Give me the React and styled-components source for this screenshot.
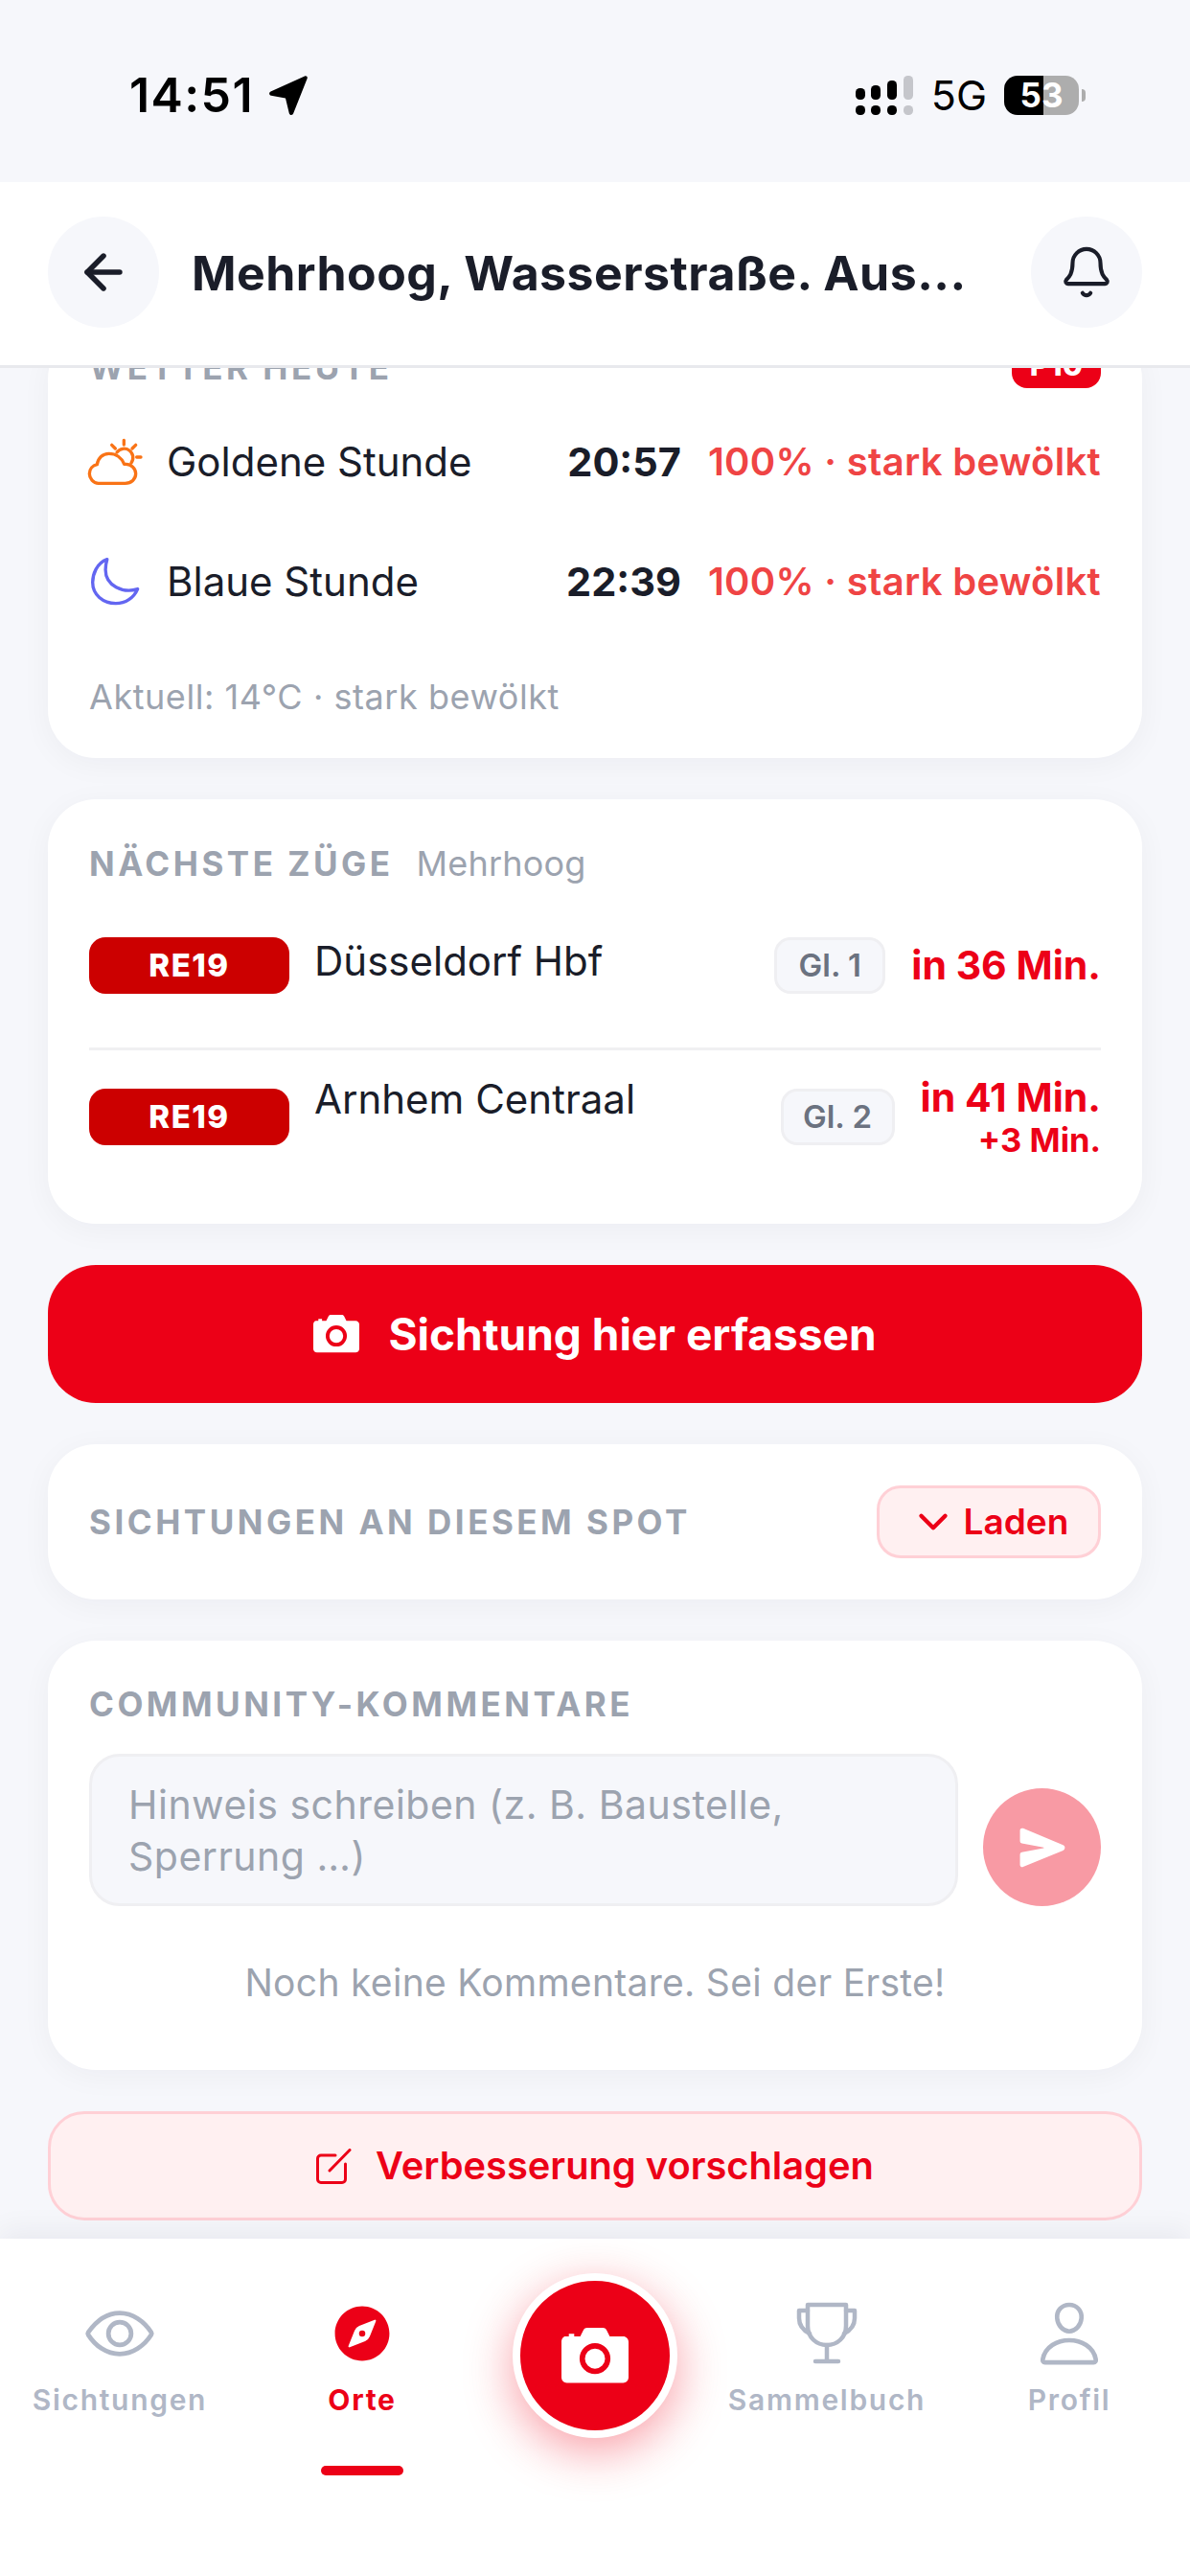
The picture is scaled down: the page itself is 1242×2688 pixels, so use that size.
import React from "react";
import styled, { createGlobalStyle } from "styled-components";
import { IoCompass, IoSend, IoEyeOutline, IoPersonOutline } from "react-icons/io5";
import { ArrowLeft, Bell, ChevronDown } from "lucide-react";

const RED = "#ec0017";
const GRAY = "#9ca3af";
const INK = "#1a1d29";

const Global = createGlobalStyle`
  html, body { margin: 0; padding: 0; background: #f6f7fb; }
  body { font-family: Inter, "Liberation Sans", sans-serif; }
  * { box-sizing: border-box; }
`;

const Screen = styled.div`
  width: 1242px; height: 2688px; display: flex; flex-direction: column;
  background: #f6f7fb; overflow: hidden;
`;
const StatusBar = styled.div`
  height: 190px; flex: none; display: flex; justify-content: space-between; align-items: flex-start;
  padding: 79px 109px 0 135px; color: #000;
`;
const Clock = styled.div`
  display: flex; align-items: center; gap: 13px; height: 41px;
  font: 600 50px/41px Inter, sans-serif; letter-spacing: 1.4px;
`;
const StatusRight = styled.div`display: flex; align-items: center; height: 41px;`;
const Signal = styled.svg`width: 61px; height: 41px; margin-right: 18px;`;
const Net = styled.span`font: 400 43px/41px Inter, sans-serif; margin-right: 18px;`;
const Battery = styled.div`
  width: 78px; height: 41px; border-radius: 14px;
  background: linear-gradient(90deg, #000 0 41px, #adadad 41px);
  color: #fff; font: 700 35px/41px Inter, sans-serif; text-align: center;
`;
const Nub = styled.div`width: 4px; height: 13px; margin-left: 3px; background: #adadad; border-radius: 0 4px 4px 0;`;

const Header = styled.header`
  height: 194px; flex: none; background: #fff; border-bottom: 3px solid #e8e9ed;
  display: flex; align-items: center; padding: 0 50px 0; position: relative; z-index: 2;
`;
const RoundBtn = styled.div`
  width: 116px; height: 116px; border-radius: 50%; background: #f6f7fb; color: ${INK};
  display: flex; align-items: center; justify-content: center; flex: none; margin-bottom: 3px;
`;
const Title = styled.h1`
  flex: 1; margin: 0 0 2px 34px; font: 700 50px/60px Inter, sans-serif; color: ${INK}; white-space: nowrap;
  letter-spacing: .45px;
`;

const Main = styled.main`
  flex: 1; min-height: 0; overflow: hidden; display: flex; flex-direction: column; justify-content: flex-end;
  gap: 43px; padding: 0 50px 19px;
`;
const Card = styled.section`
  flex: none; background: #fff; border-radius: 50px; padding: ${p => p.$pad || "44px 43px"};
  box-shadow: 0 6px 32px rgba(20, 25, 50, .045);
`;
const Label = styled.span`
  font: 700 35px/44px Inter, sans-serif; letter-spacing: 3.5px; color: ${GRAY}; white-space: nowrap;
`;
const WeatherHead = styled.div`
  display: flex; justify-content: space-between; align-items: flex-end; height: 60px; margin-bottom: 14px;
`;
const ProBadge = styled.span`
  background: ${RED}; color: #fff; border-radius: 16px; width: 93px; height: 48px;
  font: 800 31px/48px Inter, sans-serif; text-align: center;
`;
const SunRow = styled.div`display: flex; align-items: center; height: 125px;`;
const SunIcon = styled.svg`
  width: 81px; padding-right: 21px; height: ${p => p.$h}px; flex: none; fill: none; stroke: ${p => p.$c};
  stroke-width: 10; stroke-linecap: round; stroke-linejoin: round; overflow: visible;
`;
const SunName = styled.span`flex: 1; font: 400 42px/50px Inter, sans-serif; color: ${INK};`;
const SunTime = styled.span`font: 700 41.500px/50px Inter, sans-serif; color: ${INK}; margin-right: 28px;`;
const SunState = styled.span`font: 600 40px/50px Inter, sans-serif; color: #ef4444; letter-spacing: .3px;`;
const Current = styled.div`font: 400 36px/44px Inter, sans-serif; color: ${GRAY}; margin-top: 36px; letter-spacing: .55px;`;

const TrainHead = styled.div`display: flex; align-items: center; gap: 24px; height: 48px; margin-bottom: 52px;`;
const Where = styled.span`font: 400 36px/48px Inter, sans-serif; color: ${GRAY}; letter-spacing: .2px;`;
const TrainRow = styled.div`
  display: flex; align-items: center;
  ${p => p.$first
    ? `padding-bottom: 56px; border-bottom: 3px solid #f0f0f2;`
    : `padding-top: 24px;`}
`;
const Line = styled.span`
  width: 209px; height: 59px; flex: none; border-radius: 17px; background: #cc0000; color: #fff;
  font: 800 33px/59px Inter, sans-serif; text-align: center; letter-spacing: 1.500px;
`;
const Dest = styled.span`
  flex: 1; margin-left: 26px; margin-bottom: ${p => p.$lift}px; font: 400 42px/52px Inter, sans-serif; color: ${INK};
`;
const Track = styled.span`
  height: 59px; width: ${p => p.$w}px; flex: none; border-radius: 17px; background: #f6f7fb; border: 3px solid #efeff2;
  color: #6b7280; font: 600 33px/53px Inter, sans-serif; text-align: center; margin-right: 27px;
`;
const Times = styled.div`display: flex; flex-direction: column; align-items: flex-end;`;
const Due = styled.span`font: 700 41px/${p => p.$lh}px Inter, sans-serif; color: ${RED}; white-space: nowrap;`;
const Delay = styled.span`font: 700 34.500px/40px Inter, sans-serif; color: ${RED}; white-space: nowrap;`;

const PrimaryBtn = styled.div`
  flex: none; height: 144px; border-radius: 50px; background: ${RED}; color: #fff;
  display: flex; align-items: center; justify-content: center; gap: 30px;
  font: 700 46px/60px Inter, sans-serif;
`;
const SpotCard = styled(Card)`display: flex; justify-content: space-between; align-items: center;`;
const LoadBtn = styled.div`
  width: 234px; height: 76px; border-radius: 25px; background: #fff0f1; border: 3px solid #ffd0d6;
  color: ${RED}; display: flex; align-items: center; justify-content: center; gap: 7px;
  font: 600 37px/50px Inter, sans-serif;
`;
const ComposerRow = styled.div`display: flex; align-items: flex-end; gap: 26px; margin-top: 30px;`;
const Composer = styled.div`
  flex: 1; height: 159px; border-radius: 32px; background: #f6f7fb; border: 3px solid #efeff2;
  padding: 23px 38px; font: 400 41px/54px Inter, sans-serif; color: ${GRAY}; letter-spacing: .5px;
`;
const Send = styled.div`
  width: 123px; height: 123px; flex: none; border-radius: 50%; background: #f89aa4; color: #fff;
  display: flex; align-items: center; justify-content: center;
`;
const Empty = styled.div`
  margin-top: 56px; text-align: center; font: 400 39px/48px Inter, sans-serif; color: ${GRAY}; letter-spacing: .3px;
`;
const SuggestBtn = styled.div`
  flex: none; height: 114px; border-radius: 38px; background: #fff0f1; border: 3px solid #ffd0d6;
  color: ${RED}; display: flex; align-items: center; justify-content: center; gap: 25px;
  font: 600 39.800px/50px Inter, sans-serif;
`;

const TabBar = styled.nav`
  height: 352px; flex: none; background: #fff; position: relative; z-index: 2;
  display: grid; grid-template-columns: 250px 256px 230px 254px 252px;
  box-shadow: 0 -8px 28px rgba(20, 25, 50, .06);
`;
const Tab = styled.div`
  display: flex; flex-direction: column; align-items: center; padding-top: 64px;
  color: ${p => (p.$active ? RED : "#b0b7c6")};
`;
const TabIcon = styled.div`height: 70px; display: flex; align-items: center; justify-content: center;`;
const TabText = styled.span`
  margin-top: 12px; font: 600 30px/44px Inter, sans-serif; letter-spacing: 1.7px; white-space: nowrap;
  ${p => p.$active && "font-weight: 700;"}
`;
const Indicator = styled.div`width: 86px; height: 10px; border-radius: 5px; background: ${RED}; margin-top: 47px;`;
const FabCell = styled.div`display: flex; justify-content: center; padding-top: 36px;`;
const Fab = styled.div`
  width: 172px; height: 172px; border-radius: 50%; background: ${RED}; border: 8px solid #fff;
  color: #fff; display: flex; align-items: center; justify-content: center;
  box-shadow: 0 14px 50px rgba(238, 0, 23, .38);
`;

const CameraGlyph = ({ size, ring }) => (
  <svg width={size} height={size * 0.82} viewBox="0 0 50 41" fill="none">
    <path d="M3 6.500h2.500V4.500h4v2H14L16.500 1.500C17 .6 18 0 19 0h12c1 0 2 .6 2.500 1.500L36 6.500h10c2.200 0 4 1.800 4 4V37c0 2.200-1.800 4-4 4H4c-2.200 0-4-1.800-4-4V10.500c0-2.200 1.300-4 3-4z" fill="#fff" />
    <circle cx="25" cy="23" r="9.500" stroke={ring} strokeWidth="4" />
  </svg>
);

const CloudSunIcon = () => (
  <SunIcon $c="#f97316" $h={50} viewBox="99 55 120 150" preserveAspectRatio="xMinYMid meet">
    <path d="M128 197h84c19 0 33-13 33-30 0-16-14-30-30-30h-6c-8-20-26-33-48-33-20 0-34 14-37 34-14 3-24 14-24 29 0 15 12 30 28 30z" />
    <path d="M186 100a27 27 0 0 1 45 33" />
    <path d="M208 62v14M170 77l11 11M245 77l-11 11M248 115h13" />
  </SunIcon>
);

const MoonIcon = () => (
  <SunIcon $c="#6366f1" $h={52} viewBox="99 430 120 155" preserveAspectRatio="xMinYMid meet">
    <path d="M155 438C122 450 110 485 110 510c0 38 32 65 72 65 30 0 56-17 68-45-45 15-100-10-100-60 0-12 2-22 5-32z" />
  </SunIcon>
);

const TrophyIcon = () => (
  <svg width="66" height="66" viewBox="0 0 66 66" fill="none" stroke="currentColor" strokeWidth="4.500" strokeLinecap="round" strokeLinejoin="round">
    <path d="M13 3h40v22c0 12-9 20-20 20s-20-8-20-20z" />
    <path d="M13 9H4v8c0 8 5 13 11 16" />
    <path d="M53 9h9v8c0 8-5 13-11 16" />
    <path d="M33 45v17M21 62h24" />
  </svg>
);

export default function App() {
  return (
    <Screen>
      <Global />
      <StatusBar>
        <Clock>
          14:51
          <svg width="41" height="41" viewBox="0 0 41 41" style={{ marginLeft: 2 }}><path d="M38 .6 2.500 16.500C.4 17.500.8 20.400 3 20.800L18 23.500l3.800 15.700c.6 2.200 3.500 2.400 4.300.3L40.600 2.900C41.300 1.200 39.700-.2 38 .6z" fill="#000" /></svg>
        </Clock>
        <StatusRight>
          <Signal viewBox="0 0 61 41">
            <rect x="0" y="13" width="10" height="12" rx="4.500" />
            <rect x="16" y="10" width="10" height="15" rx="4.500" />
            <rect x="33" y="5" width="10" height="20" rx="4.500" />
            <rect x="50" y="0" width="10" height="25" rx="4.500" fill="#c5c6cb" />
            <rect x="0" y="31" width="10" height="10" rx="4.500" />
            <rect x="16" y="31" width="10" height="10" rx="4.500" />
            <rect x="33" y="31" width="10" height="10" rx="4.500" />
            <rect x="50" y="31" width="10" height="10" rx="4.500" fill="#c5c6cb" />
          </Signal>
          <Net>5G</Net>
          <Battery>53</Battery>
          <Nub />
        </StatusRight>
      </StatusBar>

      <Header>
        <RoundBtn><ArrowLeft size={58} strokeWidth={2.3} /></RoundBtn>
        <Title>Mehrhoog, Wasserstraße. Aus...</Title>
        <RoundBtn><Bell size={58} strokeWidth={1.7} /></RoundBtn>
      </Header>

      <Main>
        <Card $pad="0 43px 42px">
          <WeatherHead>
            <Label>WETTER HEUTE</Label>
            <ProBadge>P10</ProBadge>
          </WeatherHead>
          <SunRow>
            <CloudSunIcon />
            <SunName>Goldene Stunde</SunName>
            <SunTime>20:57</SunTime>
            <SunState>100% · stark bewölkt</SunState>
          </SunRow>
          <SunRow>
            <MoonIcon />
            <SunName>Blaue Stunde</SunName>
            <SunTime>22:39</SunTime>
            <SunState>100% · stark bewölkt</SunState>
          </SunRow>
          <Current>Aktuell: 14°C · stark bewölkt</Current>
        </Card>

        <Card $pad="43px 43px 67px">
          <TrainHead>
            <Label>NÄCHSTE ZÜGE</Label>
            <Where>Mehrhoog</Where>
          </TrainHead>
          <TrainRow $first>
            <Line>RE19</Line>
            <Dest $lift={8}>Düsseldorf Hbf</Dest>
            <Track $w={116}>Gl. 1</Track>
            <Times><Due $lh={59}>in 36 Min.</Due></Times>
          </TrainRow>
          <TrainRow>
            <Line>RE19</Line>
            <Dest $lift={36}>Arnhem Centraal</Dest>
            <Track $w={119}>Gl. 2</Track>
            <Times>
              <Due $lh={50}>in 41 Min.</Due>
              <Delay>+3 Min.</Delay>
            </Times>
          </TrainRow>
        </Card>

        <PrimaryBtn>
          <CameraGlyph size={48} ring={RED} />
          Sichtung hier erfassen
        </PrimaryBtn>

        <SpotCard $pad="43px">
          <Label>SICHTUNGEN AN DIESEM SPOT</Label>
          <LoadBtn><ChevronDown size={50} strokeWidth={2.1} />Laden</LoadBtn>
        </SpotCard>

        <Card $pad="44px 43px 67px">
          <Label>COMMUNITY-KOMMENTARE</Label>
          <ComposerRow>
            <Composer>Hinweis schreiben (z. B. Baustelle, Sperrung …)</Composer>
            <Send><IoSend size={50} /></Send>
          </ComposerRow>
          <Empty>Noch keine Kommentare. Sei der Erste!</Empty>
        </Card>

        <SuggestBtn>
          <svg width="37" height="37" viewBox="0 0 37 37" fill="none" stroke={RED} strokeWidth="3" strokeLinecap="round">
            <path d="M20 7H5a3.500 3.500 0 0 0-3.500 3.500V32A3.500 3.500 0 0 0 5 35.500h22a3.500 3.500 0 0 0 3.500-3.500V16" />
            <path d="M14 23 35 1.500" />
          </svg>
          Verbesserung vorschlagen
        </SuggestBtn>
      </Main>

      <TabBar>
        <Tab>
          <TabIcon><IoEyeOutline size={76} /></TabIcon>
          <TabText>Sichtungen</TabText>
        </Tab>
        <Tab $active>
          <TabIcon><IoCompass size={70} /></TabIcon>
          <TabText $active>Orte</TabText>
          <Indicator />
        </Tab>
        <FabCell>
          <Fab><CameraGlyph size={70} ring={RED} /></Fab>
        </FabCell>
        <Tab>
          <TabIcon><TrophyIcon /></TabIcon>
          <TabText>Sammelbuch</TabText>
        </Tab>
        <Tab>
          <TabIcon><IoPersonOutline size={74} /></TabIcon>
          <TabText>Profil</TabText>
        </Tab>
      </TabBar>
    </Screen>
  );
}
